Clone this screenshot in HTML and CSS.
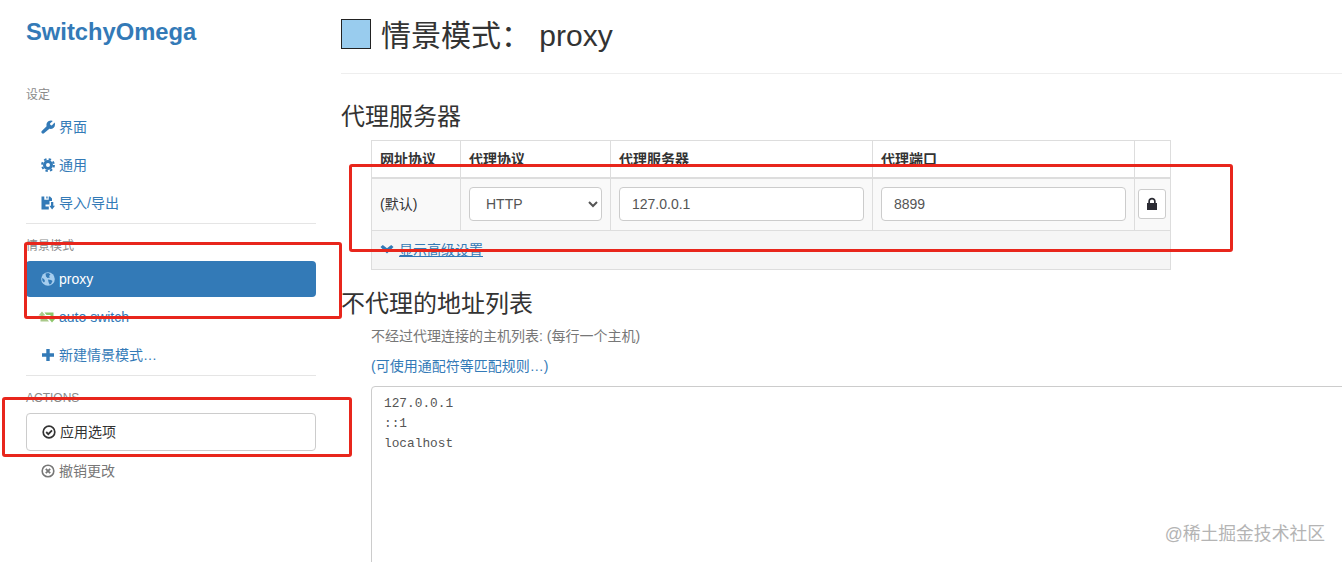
FILE: index.html
```html
<!DOCTYPE html>
<html lang="zh">
<head>
<meta charset="utf-8">
<title>SwitchyOmega</title>
<link rel="stylesheet" href="styles.css">
</head>
<body>
<div class="page">
  <aside class="side">
    <div class="brand">SwitchyOmega</div>
    <div class="nav-head">设定</div>
    <a class="nav-item"><svg class="ico" viewBox="0 0 14 14"><path d="M.8 11 5.600 6.200C5 3.400 6.800.6 10 .6c.8 0 1.400.2 1.800.4L9 3.600l.4 1.400 1.400.4 2.800-2.800c.2.400.4 1 .4 1.800 0 3.200-2.800 5-5.600 4.400L3 13.200c-.6.6-1.400.6-2 0l-.2-.2c-.6-.6-.6-1.400 0-2z"/></svg>界面</a>
    <a class="nav-item"><svg class="ico" viewBox="0 0 14 14"><circle class="gear-body" cx="7" cy="7" r="3.500"/><circle class="gear-teeth" cx="7" cy="7" r="5.900"/></svg>通用</a>
    <a class="nav-item"><svg class="ico" viewBox="0 0 14 14"><path fill-rule="evenodd" d="M.5.5h2.800v3.200h4.400V.5h1.300l2 2v2.500H8.500v3.500H4.500v2h3.300v3H.5zM5.300.5h1.300v2H5.300z"/><path d="M10 6h2.300v3.800H14L11.100 13.500 8.300 9.800H10z"/></svg>导入/导出</a>
    <div class="rule"></div>
    <div class="nav-head spaced">情景模式</div>
    <a class="nav-item active"><svg class="ico" viewBox="0 0 14 14"><circle cx="7" cy="7" r="6.800" fill="#a5cdee"/><path fill="#337ab7" d="M4.500 1.500 7.500 1 9.500 2.500 8 4 9 5.500 6.500 6 5 4.500zM7 7.500l3 .5 1.500 1-1.500 3-1.500.5L7.500 10zM1 6l2 1 1 2-1 1.500L1.500 9z"/></svg>proxy</a>
    <a class="nav-item"><svg class="ico wide" viewBox="0 0 18 14"><path fill="#a9c98a" d="M4 1.500 7.500 5.500H5.500V9H9l2 2.500H2.500V5.500H.5z"/><path fill="#8cc66a" d="M14 12.500l-3.500-4h2V5H8.500L6.500 2.500h9v6h2z"/></svg>auto switch</a>
    <a class="nav-item"><svg class="ico" viewBox="0 0 14 14"><path d="M5.300 1h3.400v4.300H13v3.400H8.700V13H5.300V8.700H1V5.300h4.300z"/></svg>新建情景模式…</a>
    <div class="rule"></div>
    <div class="nav-head spaced">ACTIONS</div>
    <button class="apply" type="button"><svg class="ico" viewBox="0 0 14 14"><circle cx="7" cy="7" r="5.800" fill="none" stroke="currentColor" stroke-width="1.700"/><path d="M4.200 7 6.300 9.100 10 5.300" fill="none" stroke="currentColor" stroke-width="1.800"/></svg>应用选项</button>
    <a class="nav-item muted"><svg class="ico" viewBox="0 0 14 14"><circle cx="7" cy="7" r="5.800" fill="none" stroke="currentColor" stroke-width="1.600"/><path d="M4.800 4.800 9.200 9.200M9.200 4.800 4.800 9.200" fill="none" stroke="currentColor" stroke-width="1.800"/></svg>撤销更改</a>
  </aside>
  <main class="main">
    <header class="page-head">
      <span class="swatch"></span>
      <h1 class="title">情景模式： <span class="title-name">proxy</span></h1>
    </header>
    <h3 class="sec sec-first">代理服务器</h3>
    <table class="servers">
      <colgroup><col class="c1"><col class="c2"><col class="c3"><col class="c4"><col class="c5"></colgroup>
      <thead>
        <tr><th>网址协议</th><th>代理协议</th><th>代理服务器</th><th>代理端口</th><th></th></tr>
      </thead>
      <tbody>
        <tr class="row">
          <td>(默认)</td>
          <td><select class="ctl"><option>HTTP</option></select></td>
          <td><input class="ctl" value="127.0.0.1"></td>
          <td><input class="ctl" value="8899"></td>
          <td class="lock-cell"><button class="lock" type="button"><svg viewBox="0 0 12 14" width="12" height="14"><path fill="#2b2b33" d="M1 6h1.300V4.200C2.300 2.200 3.900.8 6 .8s3.700 1.400 3.700 3.400V6H11v7H1zM4 6h4V4.300C8 3.200 7.100 2.500 6 2.500s-2 .7-2 1.800z"/></svg></button></td>
        </tr>
        <tr class="foot">
          <td colspan="5"><svg class="chev" viewBox="0 0 14 10"><path d="M.5 2 2.800 0 7 3.300 11.200 0 13.500 2 7 8.500z"/></svg><a class="link under">显示高级设置</a></td>
        </tr>
      </tbody>
    </table>
    <h3 class="sec sec-second">不代理的地址列表</h3>
    <div class="bypass">
      <p class="help">不经过代理连接的主机列表: (每行一个主机)</p>
      <p class="wild"><a class="link">(可使用通配符等匹配规则…)</a></p>
      <textarea class="hosts" spellcheck="false">127.0.0.1
::1
localhost</textarea>
    </div>
  </main>
</div>
<div class="mark m1"></div>
<div class="mark m2"></div>
<div class="mark m3"></div>
<div class="watermark">@稀土掘金技术社区</div>
</body>
</html>
```
FILE: styles.css
```css
* { box-sizing: border-box; }
html, body { margin: 0; height: 562px; overflow: hidden; background: #fff; }
body {
  position: relative;
  font: 14px/20px "Liberation Sans", "Noto Sans CJK SC", sans-serif;
  color: #333;
}
.page { display: flex; align-items: flex-start; height: 562px; overflow: hidden; }
.side { flex: 0 0 316px; padding-left: 26px; display: flex; flex-direction: column; }
.brand { height: 84px; padding-top: 17px; font-size: 23.75px; line-height: 30px; font-weight: 700; color: #337ab7; }
.nav-head { height: 20px; margin-bottom: 5px; font-size: 12px; line-height: 22px; color: #8a8a8a; }
.nav-head.spaced { margin-top: 11px; margin-bottom: 6px; }
.nav-item {
  height: 36px; margin-bottom: 2px; padding-left: 15px; border-radius: 4px;
  display: flex; align-items: center; color: #337ab7;
}
.nav-item.active { background: #337ab7; color: #fff; margin-bottom: 2px; }
.nav-item.muted { color: #777; }
.ico { width: 14px; height: 14px; margin-right: 4px; flex: none; fill: currentColor; }
.ico.wide { width: 18px; margin-left: -3px; margin-right: 3px; }
.gear-body { fill: none; stroke: currentColor; stroke-width: 3; }
.gear-teeth { fill: none; stroke: currentColor; stroke-width: 2; stroke-dasharray: 2.400 2.230; }
.rule { height: 1px; background: #e5e5e5; }
.apply {
  height: 38px; margin: 0 0 2px; padding: 0 0 0 15px; background: #fff; border: 1px solid #ccc; border-radius: 4px;
  display: flex; align-items: center; font: inherit; color: #333; text-align: left;
}
.main { flex: 1 1 0; min-width: 0; height: 562px; overflow: hidden; padding-left: 25px; }
.page-head { height: 74px; border-bottom: 1px solid #eee; display: flex; align-items: flex-start; padding-top: 19px; }
.swatch { width: 30px; height: 30px; background: #99ccee; border: 1px solid #222; flex: none; margin-right: 10px; }
.title { margin: 0; font-size: 30px; line-height: 34px; font-weight: 400; white-space: pre; }
.sec { margin: 0; font-size: 24px; line-height: 28px; font-weight: 400; }
.sec-first { margin-top: 29px; }
.sec-second { margin-top: 20px; }
.servers {
  margin: 9px 0 0 30px; width: 799px; table-layout: fixed; border-collapse: collapse; border: 1px solid #ddd;
}
.c1 { width: 89px; } .c2 { width: 150px; } .c3 { width: 262px; } .c4 { width: 262px; } .c5 { width: 36px; }
.servers th, .servers td { border: 1px solid #ddd; padding: 8px; text-align: left; }
.servers th { height: 37px; border-bottom-width: 2px; font-weight: 700; vertical-align: bottom; padding-bottom: 8px; }
.row td { height: 52px; background: #f9f9f9; vertical-align: middle; }
.row .lock-cell { padding: 0 0 0 3px; }
.foot td { height: 39px; background: #f5f5f5; padding: 9px 8px; }
.ctl {
  display: block; width: 100%; height: 34px; padding: 6px 12px; border: 1px solid #ccc; border-radius: 4px;
  background: #fff; color: #555; font: inherit;
}
.lock {
  width: 28px; height: 30px; padding: 0; background: #fff; border: 1px solid #ccc; border-radius: 3px;
  display: flex; align-items: center; justify-content: center;
}
.chev { width: 14px; height: 10px; margin-right: 5px; fill: #337ab7; }
.link { color: #337ab7; }
.under { text-decoration: underline; }
.bypass { padding-left: 30px; }
.help { margin: 8px 0 10px; color: #777; }
.wild { margin: 0 0 10px; }
.hosts {
  display: block; width: 1100px; height: 200px; padding: 7px 12px 6px; border: 1px solid #ccc; border-radius: 4px;
  font: 12.8px/20px "Liberation Mono", monospace; color: #555; resize: none; overflow: hidden;
}
.mark { position: absolute; border: 3px solid #e8261c; border-radius: 3px; pointer-events: none; }
.m1 { left: 349px; top: 164px; width: 884px; height: 88px; }
.m2 { left: 24px; top: 242px; width: 318px; height: 77px; }
.m3 { left: 2px; top: 397px; width: 350px; height: 60px; }
.watermark { position: absolute; right: 17px; top: 522px; font-size: 17.8px; line-height: 24px; color: #b4b4b4; white-space: nowrap; }
```
